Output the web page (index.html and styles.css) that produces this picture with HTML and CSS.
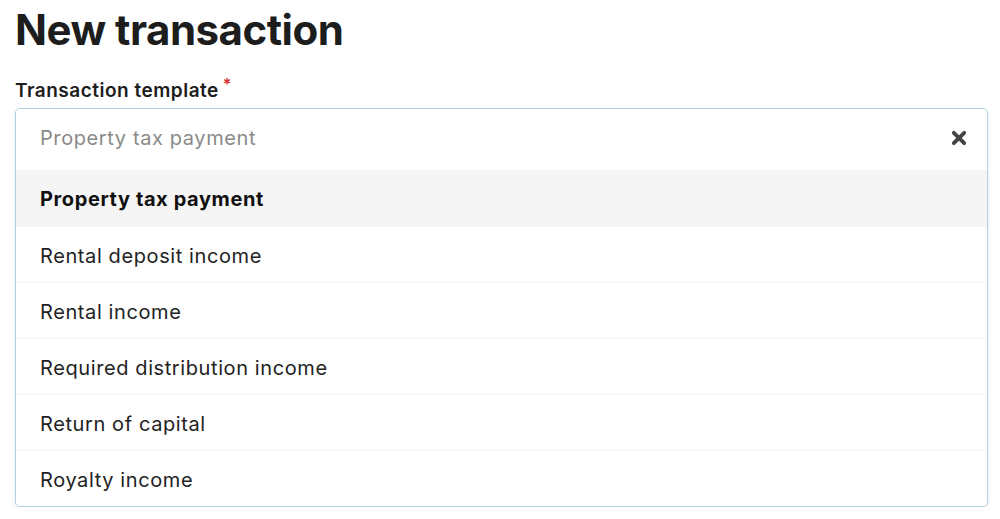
FILE: index.html
```html
<!DOCTYPE html>
<html lang="en">
<head>
<meta charset="utf-8">
<title>New transaction</title>
<link rel="stylesheet" href="styles.css">
</head>
<body>
<main class="page">
  <h1 class="title">New transaction</h1>
  <div class="field">
    <label class="label">Transaction template<span class="req">*</span></label>
    <div class="select">
      <div class="control">
        <span class="placeholder">Property tax payment</span>
        <svg class="clear" width="16" height="16" viewBox="0 0 16 16" aria-hidden="true">
          <path d="M2.8 2.8 L13.2 13.2 M13.2 2.8 L2.8 13.2" stroke="#444" stroke-width="3.8" stroke-linecap="round"/>
        </svg>
      </div>
      <ul class="menu">
        <li class="option active">Property tax payment</li>
        <li class="option">Rental deposit income</li>
        <li class="option">Rental income</li>
        <li class="option">Required distribution income</li>
        <li class="option">Return of capital</li>
        <li class="option">Royalty income</li>
      </ul>
    </div>
  </div>
</main>
</body>
</html>
```

FILE: styles.css
```css
* { box-sizing: border-box; }
html, body { margin: 0; padding: 0; background: #fff; }
body {
  font-family: Inter, "Noto Sans", "Liberation Sans", sans-serif;
  color: #1f1f1f;
}
.page {
  padding: 8px 12px 0 15px;
}
.title {
  margin: 0;
  font-size: 42px;
  font-weight: 700;
  letter-spacing: -0.5px;
  line-height: 44px;
  color: #1d1d1d;
}
.field {
  margin-top: 29px;
}
.label {
  display: block;
  font-size: 19px;
  font-weight: 600;
  line-height: 20px;
  letter-spacing: 0.5px;
  color: #1d1d1d;
}
.req {
  color: #d9302c;
  font-size: 16px;
  position: relative;
  top: -7px;
  margin-left: 4px;
}
.select {
  margin-top: 7px;
  border: 1px solid #b0d3e0;
  border-radius: 5px;
  box-shadow: 0 2px 4px rgba(0, 0, 0, 0.08);
  overflow: hidden;
}
.control {
  height: 61px;
  display: flex;
  align-items: center;
  justify-content: space-between;
  padding: 0 20px 4px 24px;
}
.placeholder {
  font-size: 20px;
  letter-spacing: 0.6px;
  color: #8a8a8a;
}
.clear { display: block; }
.menu {
  list-style: none;
  margin: 0;
  padding: 0;
}
.option {
  height: 56px;
  display: flex;
  align-items: center;
  padding: 2px 24px 0;
  font-size: 20px;
  letter-spacing: 0.6px;
  color: #222;
  border-top: 1px solid #f4f4f4;
}
.option:first-child { border-top: none; }
.option.active {
  background: #f5f5f5;
  font-weight: 700;
  color: #111;
}
```
